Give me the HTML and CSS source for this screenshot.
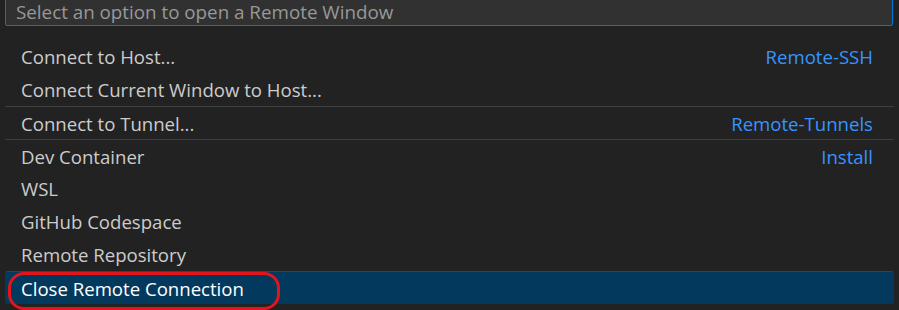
FILE: index.html
```html
<!DOCTYPE html>
<html lang="en">
<head>
	<meta charset="UTF-8">
	<title>Remote Window</title>
	<link rel="stylesheet" href="styles.css">
</head>
<body>
	<div class="quick-input">
		<!-- Filter box -->
		<div class="input-box">
			<span class="placeholder">Select an option to open a Remote Window</span>
		</div>

		<!-- Options -->
		<ul class="list">
			<li class="item"><span class="label">Connect to Host...</span><span class="detail">Remote-SSH</span></li>
			<li class="item"><span class="label">Connect Current Window to Host...</span></li>
			<li class="item separator"><span class="label">Connect to Tunnel...</span><span class="detail">Remote-Tunnels</span></li>
			<li class="item separator"><span class="label">Dev Container</span><span class="detail">Install</span></li>
			<li class="item"><span class="label">WSL</span></li>
			<li class="item"><span class="label">GitHub Codespace</span></li>
			<li class="item"><span class="label">Remote Repository</span></li>
			<li class="item separator selected">
				<span class="label">Close Remote Connection</span>
				<span class="highlight"></span>
			</li>
		</ul>
	</div>
</body>
</html>
```

FILE: styles.css
```css
* {
	margin: 0;
	padding: 0;
	box-sizing: border-box;
}

body {
	font-family: 'Open Sans', 'Noto Sans', sans-serif;
	font-size: 18.6px;
	background: #222222;
	color: #cccccc;
	height: 310px;
	overflow: hidden;
}

.quick-input {
	padding: 0 5px;
}

/* Filter box */
.input-box {
	height: 36px;
	margin-top: -10px;
	background-color: #313131;
	border: 1px solid #0078d4;
	border-radius: 2px;
	padding: 0 10px;
	display: flex;
	align-items: center;
	margin-right: 1px;
}

.placeholder {
	color: #989898;
	font-size: 18.8px;
	padding-top: 8px;
}

/* Option list */
.list {
	list-style: none;
	margin-top: 14px;
}

.item {
	position: relative;
	height: 33px;
	display: flex;
	align-items: center;
	justify-content: space-between;
	padding: 0 21px 0 16px;
	white-space: nowrap;
}

.item.separator {
	border-top: 1px solid #3f3f3f;
}

.detail {
	color: #3794ff;
}

.item.selected {
	background-color: #04395e;
	border-radius: 3px;
	color: #ffffff;
}

/* Red annotation around the selected entry */
.highlight {
	position: absolute;
	left: 3px;
	top: 0;
	width: 272px;
	height: 38px;
	border: 3px solid #e4141c;
	border-radius: 16px;
}
```
